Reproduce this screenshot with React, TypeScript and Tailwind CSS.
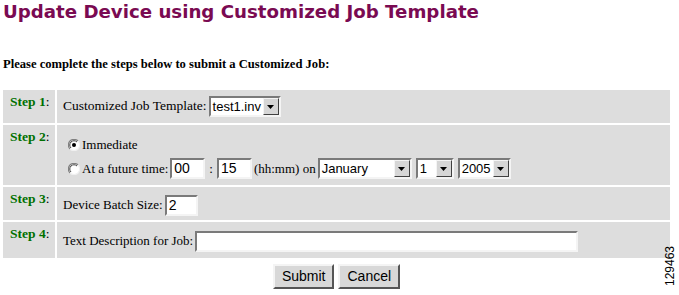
import type { ReactNode } from "react";

function Select({ value, className }: { value: string; className: string }) {
    return (
        <div
            className={`flex h-[21px] items-stretch border-2 border-t-[#7a7a7a] border-l-[#7a7a7a] border-r-[#f4f4f4] border-b-[#f4f4f4] bg-white ${className}`}
        >
            <span className="flex-1 overflow-hidden whitespace-nowrap pl-[2px] font-['Liberation_Sans',sans-serif] text-[13px] leading-[17px] text-black">
                {value}
            </span>
            <span className="flex w-[16px] shrink-0 items-center justify-center border border-t-[#f4f4f4] border-l-[#f4f4f4] border-r-[#404040] border-b-[#404040] bg-[#d6d6d6]">
                <svg width="7" height="4" viewBox="0 0 7 4">
                    <path d="M0 0h7L3.5 4z" fill="#000" />
                </svg>
            </span>
        </div>
    );
}

function TextBox({ value = "", className }: { value?: string; className: string }) {
    return (
        <div
            className={`h-[21px] border-2 border-t-[#7a7a7a] border-l-[#7a7a7a] border-r-[#f4f4f4] border-b-[#f4f4f4] bg-white pl-[2px] font-['Liberation_Sans',sans-serif] text-[14px] leading-[17px] text-black ${className}`}
        >
            {value}
        </div>
    );
}

function Radio({ checked }: { checked?: boolean }) {
    return (
        <svg width="12" height="12" viewBox="0 0 12 12" className="shrink-0">
            <circle cx="6" cy="6" r="5.5" fill="#fff" />
            <path d="M10 2A5.5 5.5 0 0 0 2 10" fill="none" stroke="#808080" strokeWidth="1.2" />
            <path d="M9 3A4 4 0 0 0 3 9" fill="none" stroke="#404040" strokeWidth="1" />
            <path d="M2 10A5.5 5.5 0 0 0 10 2" fill="none" stroke="#f0f0f0" strokeWidth="1.2" />
            {checked && <circle cx="6" cy="6" r="2" fill="#000" />}
        </svg>
    );
}

function Row({ step, children, className }: { step: string; children: ReactNode; className: string }) {
    return (
        <>
            <div className="bg-[#dddddd] pl-[7px] pt-[4px] font-['Liberation_Serif',serif] text-[13.5px] leading-[16px]">
                <span className="font-bold text-[#007000]">{step}</span>
                <span className="text-black">:</span>
            </div>
            <div className={`flex flex-col justify-center bg-[#dddddd] pl-[6px] ${className}`}>{children}</div>
        </>
    );
}

function Button({ children }: { children: ReactNode }) {
    return (
        <div className="flex h-[25px] items-center border-2 border-t-[#f4f4f4] border-l-[#f4f4f4] border-r-[#555555] border-b-[#555555] bg-[#d8d8d8] px-[7px] font-['Liberation_Sans',sans-serif] text-[14px] text-black">
            {children}
        </div>
    );
}

export default function App() {
    return (
        <div className="relative h-[295px] w-[679px] bg-white font-['Liberation_Serif',serif] text-[13px] text-black">
            <h1 className="pl-[3px] pt-[1px] font-['DejaVu_Sans',sans-serif] text-[18.2px] font-bold leading-[22px] text-[#7a0a52]">
                Update Device using Customized Job Template
            </h1>

            <p className="mt-[33px] pl-[3px] text-[12.6px] font-bold leading-[16px]">
                Please complete the steps below to submit a Customized Job:
            </p>

            <div className="mt-[18px] ml-[3px] grid w-[667px] grid-cols-[52px_1fr] gap-[2px] bg-white">
                <Row step="Step 1" className="h-[33px]">
                    <div className="flex items-center gap-[2px] text-[13.5px]">
                        <span>Customized Job Template:</span>
                        <Select value="test1.inv" className="w-[72px]" />
                    </div>
                </Row>

                <Row step="Step 2" className="h-[60px] gap-[4px] pt-[4px]">
                    <div className="flex items-center gap-[2px] pl-[5px]">
                        <Radio checked />
                        <span>Immediate</span>
                    </div>
                    <div className="flex items-center gap-[2px] pl-[5px]">
                        <Radio />
                        <span>At a future time:</span>
                        <TextBox value="00" className="w-[35px]" />
                        <span className="px-[2px]">:</span>
                        <TextBox value="15" className="w-[35px]" />
                        <span>(hh:mm) on</span>
                        <Select value="January" className="w-[94px]" />
                        <Select value="1" className="ml-[2px] w-[38px]" />
                        <Select value="2005" className="ml-[2px] w-[53px]" />
                    </div>
                </Row>

                <Row step="Step 3" className="h-[33px] pt-[3px]">
                    <div className="flex items-center gap-[2px]">
                        <span>Device Batch Size:</span>
                        <TextBox value="2" className="w-[33px]" />
                    </div>
                </Row>

                <Row step="Step 4" className="h-[36px] pt-[2px]">
                    <div className="flex items-center gap-[2px]">
                        <span>Text Description for Job:</span>
                        <TextBox className="w-[383px]" />
                    </div>
                </Row>
            </div>

            <div className="mt-[6px] flex justify-center gap-[4px] pr-[6px]">
                <Button>Submit</Button>
                <Button>Cancel</Button>
            </div>

            <span className="absolute left-[650px] top-[259px] -rotate-90 font-['Liberation_Sans',sans-serif] text-[12px] leading-[14px] text-black">
                129463
            </span>
        </div>
    );
}
